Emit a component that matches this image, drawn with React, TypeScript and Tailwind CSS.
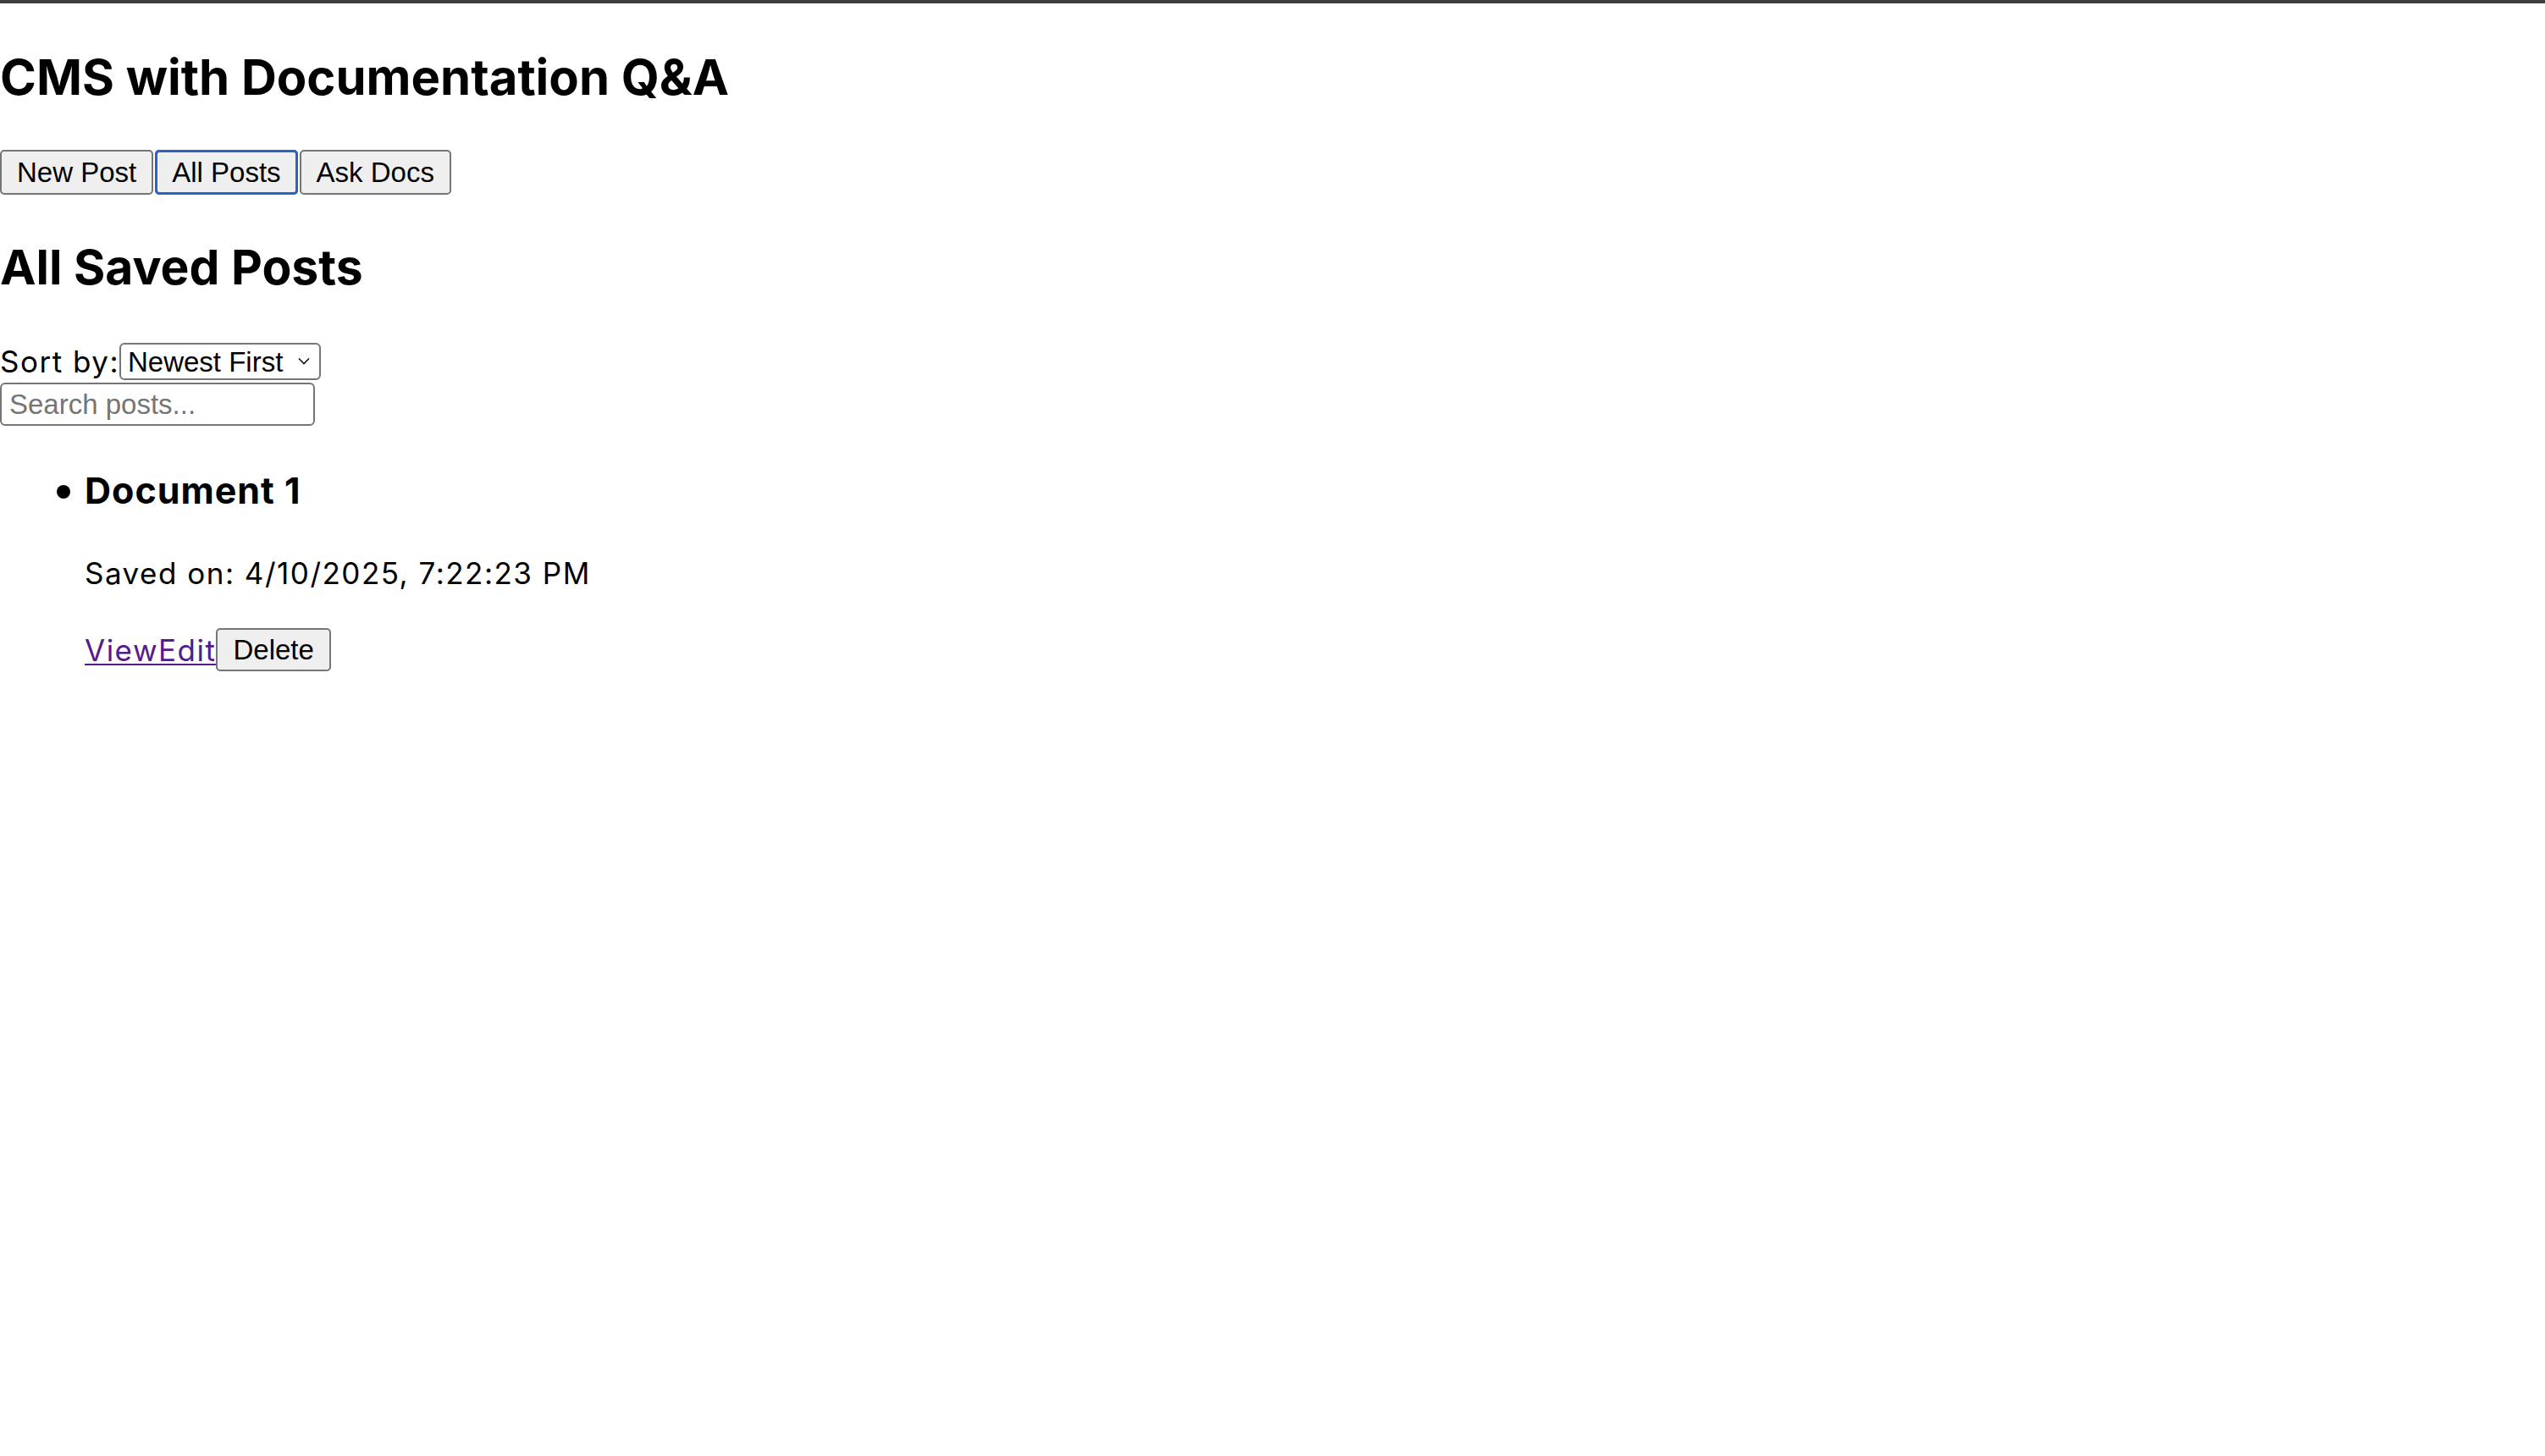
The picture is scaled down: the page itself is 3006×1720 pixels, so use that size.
import { useState } from "react";

const btn =
  "h-[53px] px-[18px] border-2 border-[#767676] rounded-[5px] bg-[#efefef] text-[33px] leading-[38px] text-black font-['Liberation_Sans',Arial,sans-serif]";

const link =
  "text-[35px] leading-[42px] tracking-[1.5px] text-[#551a8b] underline decoration-2 underline-offset-[3px]";

const App = () => {
  const [sort, setSort] = useState("newest");

  return (
    <div className="min-h-screen bg-white text-black font-['Inter',sans-serif]">
      <div className="h-[4px] bg-[#3d3d3d]" />

      <h1 className="mt-[51px] text-[58px] leading-[72px] font-bold">
        CMS with Documentation Q&amp;A
      </h1>

      <div className="mt-[50px] flex gap-[2px]">
        <button className={btn}>New Post</button>
        <button className={btn + " outline-3 outline-[#2b62c8] -outline-offset-3"}>
          All Posts
        </button>
        <button className={btn}>Ask Docs</button>
      </div>

      <h2 className="mt-[51px] text-[57px] leading-[70px] font-bold">
        All Saved Posts
      </h2>

      <div className="mt-[54px] flex items-center h-[44px]">
        <label className="text-[35px] leading-[42px] tracking-[1.5px]">Sort by:</label>
        <div className="relative">
          <select
            value={sort}
            onChange={(e) => setSort(e.target.value)}
            className="appearance-none h-[44px] w-[238px] pl-[8px] border-2 border-[#767676] rounded-[6px] bg-white text-[33px] leading-[37px] font-['Liberation_Sans',Arial,sans-serif]"
          >
            <option value="newest">Newest First</option>
            <option value="oldest">Oldest First</option>
          </select>
          <svg
            className="pointer-events-none absolute right-[13px] top-[17px]"
            width="14"
            height="9"
            viewBox="0 0 14 9"
            fill="none"
          >
            <path d="M1 1.5 L7 7.5 L13 1.5" stroke="#111" strokeWidth="1.6" />
          </svg>
        </div>
      </div>

      <input
        placeholder="Search posts..."
        className="block mt-[3px] h-[51px] w-[372px] px-[9px] border-2 border-[#767676] rounded-[6px] text-[33px] font-['Liberation_Sans',Arial,sans-serif] placeholder:text-[#757575]"
      />

      <ul className="mt-[50px] pl-[67px]">
        <li>
          <div className="flex items-center">
            <span className="w-[16px] h-[16px] rounded-full bg-black mt-[2px]" />
            <h3 className="ml-[17px] text-[43px] leading-[53px] tracking-[1px] font-bold">
              Document 1
            </h3>
          </div>
          <div className="pl-[33px]">
            <p className="mt-[50px] text-[35px] leading-[42px] tracking-[1.5px]">
              Saved on: 4/10/2025, 7:22:23 PM
            </p>
            <div className="mt-[44px] flex items-center h-[51px]">
              <a href="#" className={link}>
                View
              </a>
              <a href="#" className={link}>
                Edit
              </a>
              <button className={btn.replace("h-[53px]", "h-[51px]")}>Delete</button>
            </div>
          </div>
        </li>
      </ul>
    </div>
  );
};

export default App;
